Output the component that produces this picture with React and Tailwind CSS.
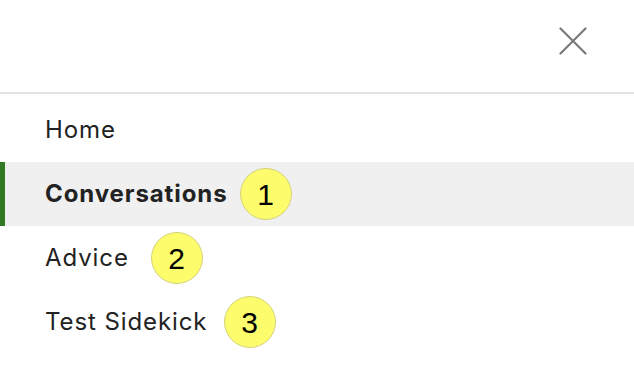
const items = [
  { label: 'Home' },
  { label: 'Conversations', active: true, badge: 1, pos: 'left-[235px]' },
  { label: 'Advice', badge: 2, pos: 'left-[151px]' },
  { label: 'Test Sidekick', badge: 3, pos: 'left-[224px]' },
];

function Badge({ n, className }) {
  return (
    <span
      className={`${className} absolute top-1/2 flex h-[52px] w-[52px] -translate-y-1/2 items-center justify-center rounded-full border border-[#d6d27c] bg-[#fcfc6c] text-[30px] font-normal text-black font-['Liberation_Sans',sans-serif]`}
    >
      {n}
    </span>
  );
}

function CloseIcon() {
  return (
    <svg width="28" height="28" viewBox="0 0 28 28" fill="none" stroke="#7a7a7a" strokeWidth="2.2" strokeLinecap="round">
      <path d="M1.5 1.5L26.5 26.5M26.5 1.5L1.5 26.5" />
    </svg>
  );
}

export default function App() {
  return (
    <div className="h-[370px] w-[634px] bg-white font-['Inter',sans-serif] text-[#222]">
      <header className="flex h-[94px] items-center justify-end border-b-2 border-[#e3e3e3] pb-[10px] pr-[47px]">
        <CloseIcon />
      </header>
      <nav className="pt-[4px]">
        {items.map((it) => (
          <div
            key={it.label}
            className={`relative flex h-16 items-center text-[24px] tracking-[0.9px] ${
              it.active ? 'border-l-[5px] border-[#2f7a23] bg-[#f0f0f0] pl-[40px] font-bold' : 'pl-[45px]'
            }`}
          >
            <span>{it.label}</span>
            {it.badge && <Badge n={it.badge} className={it.pos} />}
          </div>
        ))}
      </nav>
    </div>
  );
}
